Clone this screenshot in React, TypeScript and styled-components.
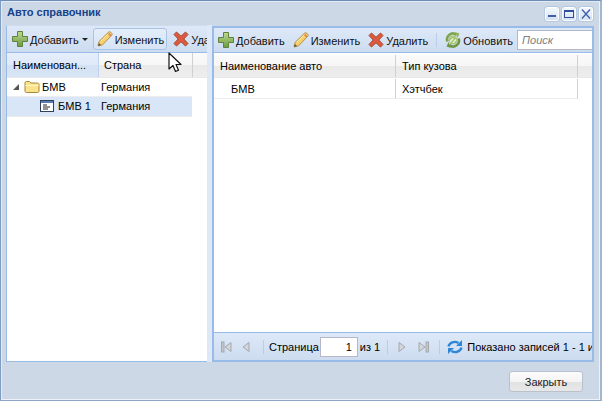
import React from 'react';
import styled, { createGlobalStyle } from 'styled-components';

const Global = createGlobalStyle`
  html, body { margin: 0; padding: 0; background: #cdd8e6; }
  body { font-family: "Liberation Sans", Arial, sans-serif; font-size: 11px; color: #000; }
  svg { flex: none; }
`;

function PlusIcon({ id }: { id: string }) {
  return (
    <svg width="16" height="16" viewBox="0 0 16 16">
      <defs>
        <linearGradient id={id} x1="0" y1="0" x2="0" y2="1">
          <stop offset="0" stopColor="#bcdb92" />
          <stop offset="1" stopColor="#6d9a3f" />
        </linearGradient>
      </defs>
      <path d="M5.500 0.500h5v5h5v5h-5v5h-5v-5h-5v-5h5z" fill={`url(#${id})`} stroke="#61803e" strokeWidth="1" />
    </svg>
  );
}

function PencilIcon() {
  return (
    <svg width="16" height="16" viewBox="0 0 16 16">
      <path d="M1 15l1-4.500L11.500 1.200c.8-.7 1.600-.6 2.200 0l1 1c.6.700.6 1.400 0 2.100L5.400 14z" fill="#f4cf6c" stroke="#b08a3c" strokeWidth="0.900" />
      <path d="M11 2l3 3" stroke="#d9824f" strokeWidth="1.600" />
      <path d="M3.500 10.500l8-8" stroke="#fcecb4" strokeWidth="1" />
      <path d="M1 15l1-3 2 2z" fill="#555" />
    </svg>
  );
}

function CrossIcon() {
  return (
    <svg width="16" height="16" viewBox="0 0 16 16">
      <path d="M3.500 1L8 5.200 12.500 1 15 3.500 10.800 8 15 12.500 12.500 15 8 10.800 3.500 15 1 12.500 5.200 8 1 3.500z" fill="#dc5a3f" stroke="#a8482f" strokeWidth="1" />
    </svg>
  );
}

function RefreshGreenIcon() {
  return (
    <svg width="16" height="16" viewBox="0 0 16 16" fill="none">
      <circle cx="8" cy="8" r="4.500" fill="#a9c77c" />
      <path d="M2.500 9.500A5.700 5.700 0 0 1 11.500 3" stroke="#7da34c" strokeWidth="2.600" />
      <path d="M13.500 6.500A5.700 5.700 0 0 1 4.500 13" stroke="#6f9641" strokeWidth="2.600" />
      <path d="M10 0l4.500 1.500-2 4.500z" fill="#8fb45a" />
      <path d="M6 16l-4.500-1.500 2-4.500z" fill="#6f9641" />
      <path d="M5 10l3-3.500M8 11l3-3.500" stroke="#e6f0cf" strokeWidth="1.300" />
    </svg>
  );
}

function RefreshBlueIcon() {
  return (
    <svg width="16" height="16" viewBox="0 0 16 16" fill="none">
      <path d="M1.500 7.500C2.500 3.500 7.500 1.500 11.500 4" stroke="#2f86d6" strokeWidth="2.400" />
      <path d="M15 1v6h-6z" fill="#2f86d6" />
      <path d="M14.500 8.500C13.500 12.500 8.500 14.500 4.500 12" stroke="#2f86d6" strokeWidth="2.400" />
      <path d="M1 15V9h6z" fill="#2f86d6" />
    </svg>
  );
}

function FolderIcon() {
  return (
    <svg width="16" height="14" viewBox="0 0 16 14">
      <path d="M1 3c0-1 .6-1.500 1.500-1.500h3L7 3h6.500c.9 0 1.500.5 1.500 1.500V11c0 1-.6 1.500-1.500 1.500h-11C1.600 12.500 1 12 1 11z" fill="#fbe38e" stroke="#a58a3a" />
      <path d="M1.500 5.500h13" stroke="#fff6c8" />
    </svg>
  );
}

function LeafIcon() {
  return (
    <svg width="14" height="12" viewBox="0 0 14 12">
      <rect x="0.500" y="0.500" width="13" height="11" fill="#fff" stroke="#2f3f5c" />
      <rect x="1" y="1" width="12" height="2" fill="#5a7cb0" />
      <path d="M3 5h4M3 7h7M3 9h5" stroke="#222" />
    </svg>
  );
}

function PageArrow({ kind }: { kind: 'first' | 'prev' | 'next' | 'last' }) {
  const left = kind === 'first' || kind === 'prev';
  const bar = kind === 'first' || kind === 'last';
  return (
    <svg width="12" height="12" viewBox="0 0 12 12">
      {left ? <path d="M10 1.500v9L4 6z" fill="#d3d6da" stroke="#a4a8ad" /> : <path d="M2 1.500v9L8 6z" fill="#d3d6da" stroke="#a4a8ad" />}
      {bar && (left ? <rect x="0.500" y="1" width="2.500" height="10" fill="#c4c7cb" stroke="#a4a8ad" /> : <rect x="9" y="1" width="2.500" height="10" fill="#c4c7cb" stroke="#a4a8ad" />)}
    </svg>
  );
}

function CursorIcon() {
  return (
    <svg width="14" height="22" viewBox="0 0 14 22">
      <path d="M1 1v16l4-3.500 2.500 6 3-1.300-2.500-5.700h5z" fill="#fff" stroke="#111" strokeWidth="1.200" strokeLinejoin="round" />
    </svg>
  );
}

export default function App() {
  return (
    <Page>
      <Global />
      <Window>
        <TitleBar>
          <Title>Авто справочник</Title>
          <WindowTools>
            <WindowTool>
              <svg width="12" height="10" viewBox="0 0 12 10"><rect x="2" y="6" width="8" height="2" fill="#3f5fa8" /></svg>
            </WindowTool>
            <WindowTool>
              <svg width="12" height="10" viewBox="0 0 12 10"><rect x="1.500" y="1.500" width="9" height="7" fill="none" stroke="#2f4f9c" /><rect x="1" y="1" width="10" height="2" fill="#2f4f9c" /></svg>
            </WindowTool>
            <WindowTool>
              <svg width="12" height="10" viewBox="0 0 12 10"><path d="M2 0.500l8 9M10 0.500l-8 9" stroke="#3f5fa8" strokeWidth="1.300" /></svg>
            </WindowTool>
          </WindowTools>
        </TitleBar>
        <Body>
          <LeftPanel>
            <LeftToolbar>
              <ToolButton><PlusIcon id="plusLeft" /><ToolLabel>Добавить</ToolLabel><Caret /></ToolButton>
              <ToolButton $hover><PencilIcon /><ToolLabel>Изменить</ToolLabel></ToolButton>
              <ToolButton><CrossIcon /><ToolLabel>Удалить</ToolLabel></ToolButton>
            </LeftToolbar>
            <HeaderRow>
              <HeaderCell $width={92} $pad={6} $active>Наименован...</HeaderCell>
              <HeaderCell $width={94} $pad={5}>Страна</HeaderCell>
              <HeaderRest />
            </HeaderRow>
            <TreeRow>
              <TreeName>
                <Expander />
                <FolderIcon />
                БМВ
              </TreeName>
              <TreeValue>Германия</TreeValue>
            </TreeRow>
            <TreeRow $selected>
              <TreeName $leaf>
                <LeafIcon />
                БМВ 1
              </TreeName>
              <TreeValue>Германия</TreeValue>
            </TreeRow>
          </LeftPanel>
          <Splitter />
          <RightPanel>
            <RightToolbar>
              <ToolButton><PlusIcon id="plusRight" /><ToolLabel>Добавить</ToolLabel></ToolButton>
              <ToolButton><PencilIcon /><ToolLabel>Изменить</ToolLabel></ToolButton>
              <ToolButton><CrossIcon /><ToolLabel>Удалить</ToolLabel></ToolButton>
              <ToolSep />
              <ToolButton><RefreshGreenIcon /><ToolLabel>Обновить</ToolLabel></ToolButton>
              <SearchBox>Поиск</SearchBox>
            </RightToolbar>
            <GridHeader>
              <HeaderCell $width={182} $pad={6}>Наименование авто</HeaderCell>
              <HeaderCell $width={182} $pad={6}>Тип кузова</HeaderCell>
              <HeaderRest />
            </GridHeader>
            <GridRow>
              <GridCell $width={182} $pad={17}>БМВ</GridCell>
              <GridCell $width={182} $pad={6}>Хэтчбек</GridCell>
            </GridRow>
            <GridSpacer />
            <Pager>
              <PagerIcon $width={18}><PageArrow kind="first" /></PagerIcon>
              <PagerIcon $width={24}><PageArrow kind="prev" /></PagerIcon>
              <PagerSep $right={5} />
              <span>Страница</span>
              <PageInput>1</PageInput>
              <span>из 1</span>
              <PagerSep $left={7} $right={9} />
              <PagerIcon $width={20}><PageArrow kind="next" /></PagerIcon>
              <PagerIcon $width={22}><PageArrow kind="last" /></PagerIcon>
              <PagerSep $right={7} />
              <RefreshBlueIcon />
              <PagerInfo>Показано записей 1 - 1 из 1</PagerInfo>
            </Pager>
          </RightPanel>
        </Body>
        <Footer>
          <CloseButton>Закрыть</CloseButton>
        </Footer>
      </Window>
      <Cursor><CursorIcon /></Cursor>
    </Page>
  );
}

const Page = styled.div`
  position: relative;
  width: 602px;
  height: 401px;
  overflow: hidden;
`;

const Window = styled.div`
  box-sizing: border-box;
  width: 602px;
  height: 401px;
  display: flex;
  flex-direction: column;
  background: #cdd8e6;
  border-style: solid;
  border-width: 1px 2px 1px 1px;
  border-color: #6d8db8 #a3b7d1 #8ea6c6 #7f9cc2;
  box-shadow: inset 1px 1px 0 #e3eaf3, inset -1px -1px 0 #eef2f7;
  padding: 0 6px 0 5px;
`;

const TitleBar = styled.div`
  height: 24px;
  flex: none;
  display: flex;
  align-items: center;
  justify-content: space-between;
`;

const Title = styled.div`
  font-weight: bold;
  color: #15428b;
  font-size: 11px;
  padding-left: 1px;
  margin-top: -2px;
`;

const WindowTools = styled.div`
  display: flex;
  gap: 5px;
  margin-top: 2px;
  margin-right: 2px;
`;

const WindowTool = styled.div`
  box-sizing: border-box;
  width: 12px;
  height: 12px;
  display: flex;
  align-items: center;
  justify-content: center;
  background: linear-gradient(#f4f8fd, #d3e1f3);
  border-radius: 2px;
  box-shadow: 0 0 0 1px #fff, 0 0 0 2px #b5c8e0;
`;

const Body = styled.div`
  height: 337px;
  flex: none;
  display: flex;
  align-items: stretch;
`;

const LeftPanel = styled.div`
  box-sizing: border-box;
  width: 201px;
  flex: none;
  overflow: hidden;
  background: #fff;
  border: 1px solid #99bbe8;
  border-top: 1px solid #cfdcee;
  border-right: none;
`;

const RightPanel = styled.div`
  box-sizing: border-box;
  flex: 1;
  min-width: 0;
  overflow: hidden;
  display: flex;
  flex-direction: column;
  background: #fff;
  border: 2px solid #99bbe8;
  margin-top: 1px;
`;

const Splitter = styled.div`
  width: 5px;
  flex: none;
  background: #dfe8f6;
`;

const LeftToolbar = styled.div`
  box-sizing: border-box;
  height: 27px;
  display: flex;
  align-items: center;
  padding: 0 0 0 1px;
  white-space: nowrap;
  background: linear-gradient(#dde9f8, #cddcf0);
  border-bottom: 1px solid #99bbe8;
`;

const RightToolbar = styled(LeftToolbar)`
  height: 25px;
  flex: none;
  padding: 0;
`;

const ToolButton = styled.div<{ $hover?: boolean }>`
  box-sizing: border-box;
  height: 22px;
  display: flex;
  flex: none;
  align-items: center;
  gap: 2px;
  padding: 0 ${p => (p.$hover ? '2px' : '3px')} 0 3px;
  margin: 0 ${p => (p.$hover ? '2px' : '0')} 0 ${p => (p.$hover ? '1px' : '0')};
  color: #111;
  border: 1px solid ${p => (p.$hover ? '#a9c4e6' : 'transparent')};
  border-radius: 3px;
  background: ${p => (p.$hover ? 'linear-gradient(#e4eefa, #d5e3f5)' : 'none')};
`;

const ToolLabel = styled.span`
  padding-top: 1px;
`;

const Caret = styled.span`
  width: 0;
  height: 0;
  margin-left: 1px;
  border-left: 3px solid transparent;
  border-right: 3px solid transparent;
  border-top: 3px solid #222;
`;

const ToolSep = styled.div`
  width: 1px;
  height: 14px;
  flex: none;
  margin: 0 4px;
  background: #b7cde8;
`;

const SearchBox = styled.div`
  box-sizing: border-box;
  width: 90px;
  height: 20px;
  flex: none;
  padding-left: 4px;
  line-height: 18px;
  font-style: italic;
  color: #808080;
  background: #fff;
  border: 1px solid #b5b8c8;
  border-right: none;
`;

const HeaderRow = styled.div`
  box-sizing: border-box;
  height: 25px;
  display: flex;
  background: linear-gradient(#fafafa 0, #f6f6f6 50%, #e9e9e9 51%, #eeeeee 100%);
  border-bottom: 1px solid #e8e8e8;
`;

const GridHeader = styled(HeaderRow)`
  height: 23px;
  flex: none;
  margin-top: 2px;
`;

const HeaderCell = styled.div<{ $width: number; $pad: number; $active?: boolean }>`
  box-sizing: border-box;
  width: ${p => p.$width}px;
  flex: none;
  padding-left: ${p => p.$pad}px;
  display: flex;
  align-items: center;
  white-space: nowrap;
  border-right: 1px solid ${p => (p.$active ? '#bcd2ee' : '#d0d0d0')};
  background: ${p => (p.$active ? 'linear-gradient(#e5eefa 0, #dfe9f8 50%, #d3e1f4 51%, #d8e5f6 100%)' : 'none')};
`;

const HeaderRest = styled.div`
  flex: 1;
`;

const TreeRow = styled.div<{ $selected?: boolean }>`
  box-sizing: border-box;
  width: 185px;
  height: ${p => (p.$selected ? '20px' : '19px')};
  padding-bottom: ${p => (p.$selected ? '1px' : '0')};
  display: flex;
  align-items: center;
  border-bottom: 1px solid #ededed;
  background: ${p => (p.$selected ? '#d9e6f8' : '#fff')};
`;

const TreeName = styled.div<{ $leaf?: boolean }>`
  width: 92px;
  flex: none;
  box-sizing: border-box;
  display: flex;
  align-items: center;
  gap: ${p => (p.$leaf ? '4px' : '2px')};
  padding-left: ${p => (p.$leaf ? '33px' : '6px')};
  white-space: nowrap;
`;

const Expander = styled.span`
  width: 0;
  height: 0;
  margin-right: 3px;
  border-left: 6px solid transparent;
  border-bottom: 6px solid #555;
`;

const TreeValue = styled.div`
  padding-left: 2px;
  white-space: nowrap;
`;

const GridRow = styled.div`
  height: 20px;
  flex: none;
  margin-top: 1px;
  display: flex;
`;

const GridCell = styled.div<{ $width: number; $pad: number }>`
  box-sizing: border-box;
  width: ${p => p.$width}px;
  flex: none;
  display: flex;
  align-items: center;
  padding-left: ${p => p.$pad}px;
  border-right: 1px solid #d0d0d0;
  border-bottom: 1px solid #ededed;
`;

const GridSpacer = styled.div`
  flex: 1;
`;

const Pager = styled.div`
  box-sizing: border-box;
  height: 28px;
  flex: none;
  display: flex;
  align-items: center;
  white-space: nowrap;
  padding-left: 7px;
  background: linear-gradient(#dde9f8, #cddcf0);
  border-top: 1px solid #99bbe8;
`;

const PagerIcon = styled.div<{ $width: number }>`
  width: ${p => p.$width}px;
  flex: none;
  display: flex;
`;

const PagerSep = styled.div<{ $left?: number; $right: number }>`
  width: 1px;
  height: 14px;
  flex: none;
  margin: 0 ${p => p.$right}px 0 ${p => p.$left ?? 0}px;
  background: #b7cde8;
`;

const PageInput = styled.div`
  box-sizing: border-box;
  width: 38px;
  height: 20px;
  flex: none;
  margin: 0 2px 0 1px;
  padding-right: 5px;
  text-align: right;
  line-height: 18px;
  background: #fff;
  border: 1px solid #b5b8c8;
`;

const PagerInfo = styled.span`
  flex: none;
  margin-left: 4px;
`;

const Footer = styled.div`
  flex: 1;
  display: flex;
  justify-content: flex-end;
  align-items: flex-start;
  padding: 9px 11px 0 0;
`;

const CloseButton = styled.div`
  box-sizing: border-box;
  width: 74px;
  height: 21px;
  padding-top: 1px;
  display: flex;
  align-items: center;
  justify-content: center;
  background: linear-gradient(#fbfbfb 0, #f4f4f4 50%, #e2e2e2 51%, #e8e8e8 100%);
  border: 1px solid #b9c2cc;
  border-radius: 3px;
  color: #222;
`;

const Cursor = styled.div`
  position: absolute;
  left: 168px;
  top: 52px;
`;
